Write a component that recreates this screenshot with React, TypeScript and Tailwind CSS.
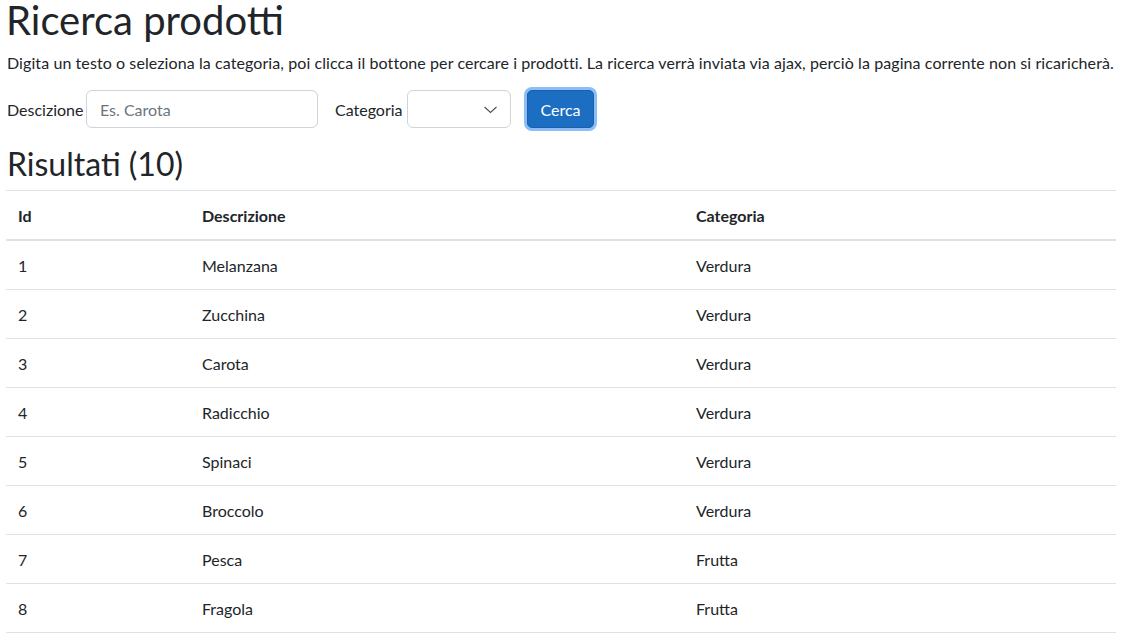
const rows: [number, string, string][] = [
  [1, "Melanzana", "Verdura"],
  [2, "Zucchina", "Verdura"],
  [3, "Carota", "Verdura"],
  [4, "Radicchio", "Verdura"],
  [5, "Spinaci", "Verdura"],
  [6, "Broccolo", "Verdura"],
  [7, "Pesca", "Frutta"],
  [8, "Fragola", "Frutta"],
  [9, "Mela", "Frutta"],
  [10, "Pera", "Frutta"],
];

export default function App() {
  return (
    <div className="bg-white text-[#212529] font-['Lato',sans-serif] pl-[6px] w-[1116px] pb-4">
      <h1 className="text-[40px] leading-[40px] font-normal m-0">Ricerca prodotti</h1>
      <p className="text-[16px] leading-[24px] mt-[11px] pl-px tracking-[0.085px]">
        Digita un testo o seleziona la categoria, poi clicca il bottone per cercare i prodotti. La ricerca verrà inviata via ajax, perciò la pagina corrente non si ricaricherà.
      </p>
      <div className="flex items-center h-[38px] mt-[15px] text-[16px]">
        <label className="pl-px pt-[2px] mr-[5px] w-[75px] whitespace-nowrap">Descizione</label>
        <input
          className="w-[232px] h-[38px] border border-[#ced4da] rounded-[6px] px-[13px] text-[16px] placeholder:text-[#6c757d] outline-none"
          placeholder="Es. Carota"
        />
        <label className="ml-[17px] pt-[2px] mr-[4px] w-[68px] whitespace-nowrap">Categoria</label>
        <div className="relative w-[104px] h-[38px] border border-[#ced4da] rounded-[6px]">
          <svg className="absolute left-[76px] top-[15px]" width="13" height="8" viewBox="0 0 13 8">
            <path d="M0.5 1 L6.5 6.5 L12.5 1" fill="none" stroke="#495057" strokeWidth="1.1" />
          </svg>
        </div>
        <button className="ml-[16px] w-[67px] h-[38px] rounded-[5px] bg-[#1b6ec2] border border-[#1861ac] text-white text-[16px] pt-px shadow-[0_0_0_3px_#8cbdf4]">
          Cerca
        </button>
      </div>
      <h2 className="text-[32px] leading-[38px] font-normal mt-[17px] mb-[7px] pl-px">Risultati (10)</h2>
      <table className="w-[1110px] border-collapse text-[16px] leading-[24px] table-fixed">
        <colgroup>
          <col className="w-[184px]" />
          <col className="w-[494px]" />
          <col />
        </colgroup>
        <thead>
          <tr className="border-t border-[#dee2e6] border-b-2 border-b-[#dee2e6]">
            <th className="text-left font-bold px-[12px] pt-[13px] pb-[11px]">Id</th>
            <th className="text-left font-bold px-[12px] pt-[13px] pb-[11px]">Descrizione</th>
            <th className="text-left font-bold px-[12px] pt-[13px] pb-[11px]">Categoria</th>
          </tr>
        </thead>
        <tbody>
          {rows.map(([id, d, c]) => (
            <tr key={id} className="border-b border-[#dee2e6]">
              <td className="px-[12px] pt-[13px] pb-[11px]">{id}</td>
              <td className="px-[12px] pt-[13px] pb-[11px]">{d}</td>
              <td className="px-[12px] pt-[13px] pb-[11px]">{c}</td>
            </tr>
          ))}
        </tbody>
      </table>
    </div>
  );
}
